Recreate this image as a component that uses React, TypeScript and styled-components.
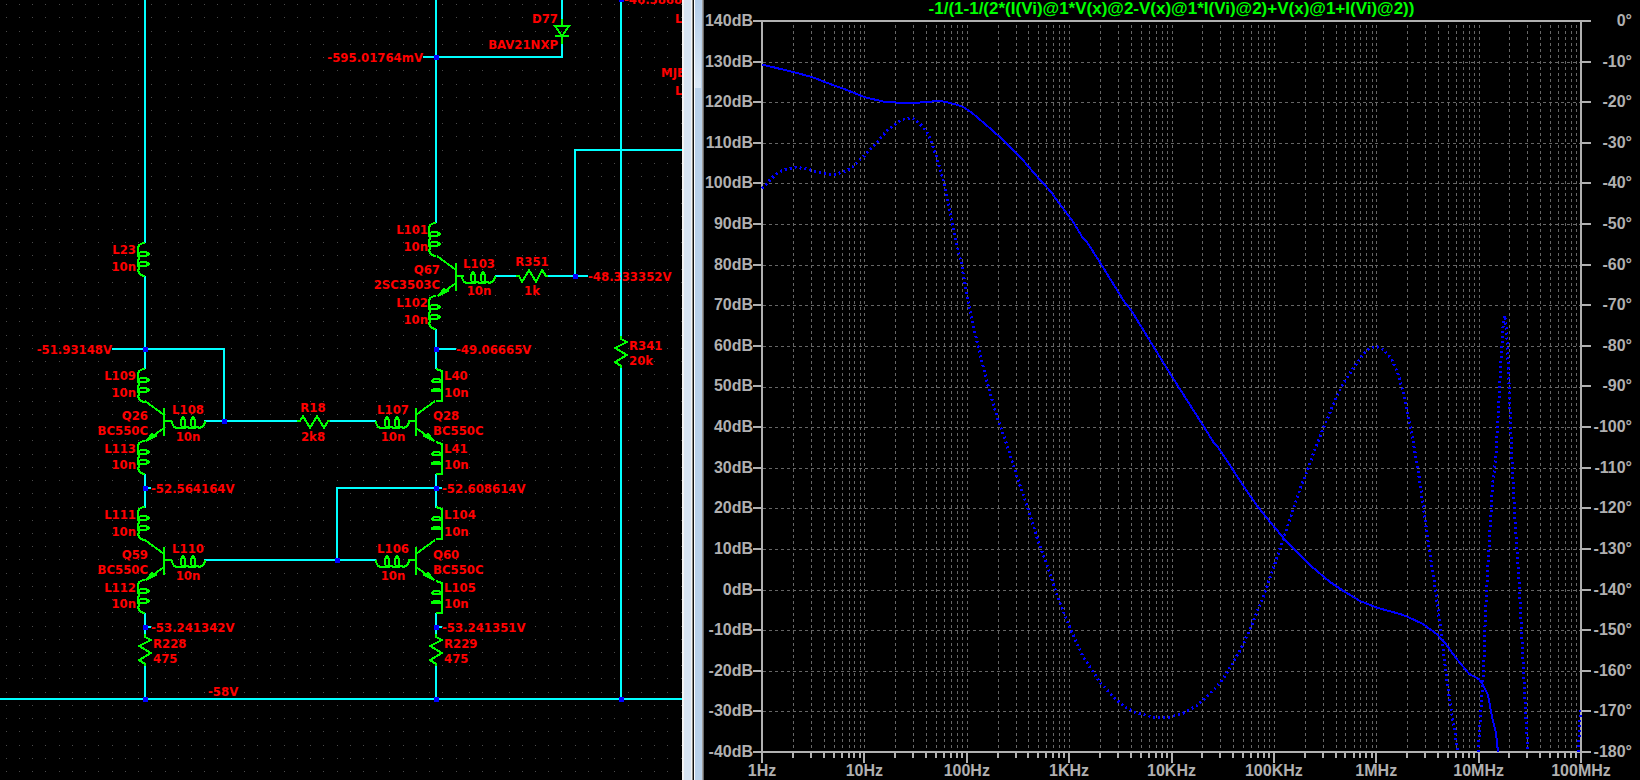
import React from "react";
import styled, { createGlobalStyle } from "styled-components";

const GlobalStyle = createGlobalStyle`
  body {
    margin: 0;
    background: #000;
  }
`;

const Workspace = styled.main`
  display: grid;
  grid-template-columns: minmax(0, 682fr) 22px minmax(0, 936fr);
  height: 100vh;
  min-height: 480px;
  overflow: hidden;
  background: #000;
`;

/* ---------- Schematic ---------- */

const SchematicPane = styled.section`
  min-width: 0;
  overflow: hidden;
`;

const SchematicCanvas = styled.svg`
  display: block;
  width: 100%;
  height: 100%;
  shape-rendering: crispEdges;
`;

const GridDots = styled.path`
  stroke: #4a4a4a;
  stroke-width: 1px;
`;

const Wire = styled.path`
  fill: none;
  stroke: #00ffff;
  stroke-width: 2px;
`;

const SymbolPath = styled.path`
  fill: none;
  stroke: #00ff00;
  stroke-width: 2px;
`;

const Junction = styled.rect`
  fill: #0000ff;
`;

type Anchor = "start" | "middle" | "end";

const Label = styled.text<{ $anchor: Anchor }>`
  fill: #ff0000;
  font: bold 13px "DejaVu Sans Condensed", "DejaVu Sans", sans-serif;
  text-anchor: ${(p) => p.$anchor};
`;

const dotPath = (() => {
  const parts: string[] = [];
  for (let r = 0; r < 90; r++) {
    for (let c = 0; c < 120; c++) {
      parts.push(`M${Math.floor(6.3 + c * 13.23)} ${Math.floor(4.7 + r * 13.22)}.5h1`);
    }
  }
  return parts.join("");
})();

const wires = [
  "M145 0V243M145 276V369M112 349H225M224 349V421M204 421H298M329 421H376",
  "M145 474V508M145 488H151M145 613V634M145 627H151M145 666V699",
  "M0 699H3000",
  "M436 0V223M423 57H563M562 57V44M562 0V19M436 329V369M436 349H456",
  "M495 276H517M547 276H588M575 276V149M574 150H3000M621 0V336M621 367V699",
  "M436 474V508M337 560V487M336 488H442M204 560H376M436 613V634M436 627H442M436 666V699",
];

const junctions: [number, number][] = [
  [145, 349], [224, 421], [145, 488], [145, 627], [145, 699],
  [436, 57], [436, 349], [436, 488], [436, 627], [436, 699],
  [575, 276], [621, -1], [621, 699], [337, 560],
];

const COIL =
  "M0 0V2L2 6L5 7H12L15 6L18 7H22L25 6L28 7L31 5L33 2V0M10 7L9 3V-1L11-4L13-1V3L12 7M20 7L19 3V-1L21-4L23-1V3L22 7";
const FLAT_COIL = "M0 0L6 2V32H0M6 13H-3L-4 12L-2 10H3L5 12M6 22H-4V21L-2 20H3L6 22";
const RESISTOR = "M0 0V3L6 6L-6 12L6 19L-6 26L0 30V32";
const TRANSISTOR = "M0-13V15M0 0H8M-19-20L0-6M0 7L-18 20M-18 20L-12 13L-8 15Z";

const horizontalCoils: [number, number][] = [[172, 421], [172, 560], [376, 421], [376, 560], [462, 276]];
const leftCoils: [number, number][] = [
  [145, 243], [145, 369], [145, 441], [145, 507], [145, 580], [436, 223], [436, 296],
];
const rightCoils: [number, number][] = [[436, 369], [436, 442], [436, 507], [436, 581]];
const resistors: [number, number][] = [[145, 634], [436, 634], [621, 336]];
const transistors: [number, number, number][] = [
  [164, 421, 1], [164, 560, 1], [456, 276, 1], [416, 421, -1], [416, 560, -1],
];

const labels: [string, number, number, Anchor][] = [
  ["L23", 136, 254, "end"],
  ["10n", 136, 271, "end"],
  ["-51.93148V", 112, 354, "end"],
  ["L109", 136, 380, "end"],
  ["10n", 136, 397, "end"],
  ["Q26", 148, 420, "end"],
  ["BC550C", 148, 435, "end"],
  ["L113", 136, 453, "end"],
  ["10n", 136, 469, "end"],
  ["L108", 188, 414, "middle"],
  ["10n", 188, 441, "middle"],
  ["R18", 313, 412, "middle"],
  ["2k8", 313, 441, "middle"],
  ["-52.564164V", 151, 493, "start"],
  ["L111", 136, 519, "end"],
  ["10n", 136, 536, "end"],
  ["Q59", 148, 559, "end"],
  ["BC550C", 148, 574, "end"],
  ["L112", 136, 592, "end"],
  ["10n", 136, 608, "end"],
  ["L110", 188, 553, "middle"],
  ["10n", 188, 580, "middle"],
  ["-53.241342V", 151, 632, "start"],
  ["R228", 153, 648, "start"],
  ["475", 153, 663, "start"],
  ["-58V", 208, 696, "start"],
  ["-595.01764mV", 423, 62, "end"],
  ["D77", 558, 23, "end"],
  ["BAV21NXP", 558, 49, "end"],
  ["-46.5868", 624, 4, "start"],
  ["L", 675, 23, "start"],
  ["MJE", 661, 77, "start"],
  ["L", 675, 95, "start"],
  ["L101", 428, 234, "end"],
  ["10n", 428, 251, "end"],
  ["Q67", 440, 274, "end"],
  ["2SC3503C", 440, 289, "end"],
  ["L102", 428, 307, "end"],
  ["10n", 428, 324, "end"],
  ["L103", 479, 268, "middle"],
  ["10n", 479, 295, "middle"],
  ["R351", 532, 266, "middle"],
  ["1k", 532, 295, "middle"],
  ["-48.333352V", 588, 281, "start"],
  ["-49.06665V", 456, 354, "start"],
  ["R341", 629, 350, "start"],
  ["20k", 629, 365, "start"],
  ["L40", 444, 380, "start"],
  ["10n", 444, 397, "start"],
  ["Q28", 433, 420, "start"],
  ["BC550C", 433, 435, "start"],
  ["L41", 444, 453, "start"],
  ["10n", 444, 469, "start"],
  ["L107", 393, 414, "middle"],
  ["10n", 393, 441, "middle"],
  ["-52.608614V", 442, 493, "start"],
  ["L104", 444, 519, "start"],
  ["10n", 444, 536, "start"],
  ["Q60", 433, 559, "start"],
  ["BC550C", 433, 574, "start"],
  ["L105", 444, 592, "start"],
  ["10n", 444, 608, "start"],
  ["L106", 393, 553, "middle"],
  ["10n", 393, 580, "middle"],
  ["-53.241351V", 442, 632, "start"],
  ["R229", 444, 648, "start"],
  ["475", 444, 663, "start"],
];

function Schematic() {
  return (
    <SchematicPane aria-label="Schematic">
      <SchematicCanvas>
        <GridDots d={dotPath} />
        {wires.map((d) => (
          <Wire key={d} d={d} />
        ))}
        {horizontalCoils.map(([x, y]) => (
          <SymbolPath key={`${x},${y}`} d={COIL} transform={`translate(${x} ${y})`} />
        ))}
        {leftCoils.map(([x, y]) => (
          <SymbolPath key={`${x},${y}`} d={COIL} transform={`translate(${x} ${y}) rotate(90)`} />
        ))}
        {rightCoils.map(([x, y]) => (
          <SymbolPath key={`${x},${y}`} d={FLAT_COIL} transform={`translate(${x} ${y})`} />
        ))}
        {resistors.map(([x, y]) => (
          <SymbolPath key={`${x},${y}`} d={RESISTOR} transform={`translate(${x} ${y})`} />
        ))}
        {transistors.map(([x, y, side]) => (
          <SymbolPath key={`${x},${y}`} d={TRANSISTOR} transform={`translate(${x} ${y}) scale(${side} 1)`} />
        ))}
        <SymbolPath d="M297 421H300L303 416L310 428L317 416L324 428L328 421H330" />
        <SymbolPath d="M516 276H519L522 282L529 270L536 282L542 270L546 276H548" />
        <SymbolPath d="M562 19V26M555 26H569L562 36ZM555 36H569M562 36V44" />
        {junctions.map(([x, y]) => (
          <Junction key={`${x},${y}`} x={x - 2} y={y - 2} width={5} height={5} />
        ))}
        {labels.map(([text, x, y, anchor]) => (
          <Label key={`${text}${x},${y}`} x={x} y={y} $anchor={anchor}>
            {text}
          </Label>
        ))}
      </SchematicCanvas>
    </SchematicPane>
  );
}

/* ---------- Window borders between the two panes ---------- */

const Borders = styled.div`
  display: flex;
`;

const BorderStrip = styled.div<{ $width: number; $color: string }>`
  flex: 0 0 ${(p) => p.$width}px;
  background: ${(p) => p.$color};
`;

const GlossStrip = styled(BorderStrip)`
  background: linear-gradient(#b4cde8, #dce9f6) top / 100% 88px no-repeat ${(p) => p.$color};
`;

/* ---------- Plot ---------- */

const AXIS = "#b0b0b0";

const PlotPane = styled.section`
  display: grid;
  grid-template-columns: 58px minmax(0, 1fr) 59px;
  grid-template-rows: 21px minmax(0, 1fr) 28px;
  color: ${AXIS};
  font: bold 16px/18px "Liberation Sans", Arial, sans-serif;
  white-space: nowrap;
`;

const TraceTitle = styled.h1`
  grid-column: 2;
  margin: 0;
  color: #00ff00;
  font-size: 17px;
  line-height: 18px;
  text-align: center;
`;

const ValueAxis = styled.ol<{ $side: "left" | "right" }>`
  grid-row: 2;
  grid-column: ${(p) => (p.$side === "left" ? 1 : 3)};
  display: flex;
  flex-direction: column;
  justify-content: space-between;
  margin: -9px 0;
  padding: 0 ${(p) => (p.$side === "left" ? 0 : 8)}px 0 0;
  list-style: none;
`;

const ValueTick = styled.li<{ $side: "left" | "right" }>`
  display: flex;
  flex-direction: ${(p) => (p.$side === "left" ? "row-reverse" : "row")};
  align-items: center;
  justify-content: ${(p) => (p.$side === "left" ? "flex-start" : "space-between")};
  height: 18px;

  &::before {
    content: "";
    width: ${(p) => (p.$side === "left" ? 9 : 10)}px;
    height: 2px;
    background: ${AXIS};
  }
`;

const PlotArea = styled.svg`
  grid-row: 2;
  grid-column: 2;
  display: block;
  width: 100%;
  height: 100%;
  overflow: visible;
  shape-rendering: crispEdges;

  path,
  polyline {
    fill: none;
    vector-effect: non-scaling-stroke;
  }
`;

const GridLines = styled.path`
  stroke: #666;
  stroke-width: 1px;
  stroke-dasharray: 3 3;
`;

const AxisLine = styled.path`
  stroke: ${AXIS};
  stroke-width: 2px;
`;

const Trace = styled.polyline<{ $dotted?: boolean }>`
  stroke: #0000ff;
  stroke-width: ${(p) => (p.$dotted ? 3 : 2)}px;
  stroke-dasharray: ${(p) => (p.$dotted ? "2 3" : "none")};
`;

const FrequencyAxis = styled.ol`
  grid-row: 3;
  grid-column: 2;
  display: flex;
  justify-content: space-between;
  margin: 0 -40px;
  padding: 10px 0 0;
  list-style: none;
`;

const FrequencyTick = styled.li`
  width: 80px;
  text-align: center;
`;

const WIDTH = 819;
const HEIGHT = 731;
const decade = WIDTH / 8;
const step = HEIGHT / 18;

const verticals: number[] = [];
const minorTicks: number[] = [];
for (let d = 0; d < 8; d++) {
  for (let n = 1; n < 10; n++) {
    const x = Math.round((d + Math.log10(n)) * decade);
    if (x > 0) verticals.push(x);
    if (n > 1) minorTicks.push(x);
  }
}
const decades = Array.from({ length: 9 }, (_, i) => Math.round(i * decade));
const verticalGrid = verticals.map((x) => `M${x}.5 4V${HEIGHT}`).join("");
const horizontalGrid = Array.from({ length: 17 }, (_, i) => `M1 ${Math.round((i + 1) * step)}.5H${WIDTH}`).join("");
const tickPath =
  minorTicks.map((x) => `M${x} ${HEIGHT}v6`).join("") + decades.map((x) => `M${x} ${HEIGHT}v11`).join("");

const magnitude =
  "762,64.5 793,72 812,77 824,81.7 834,85.5 847,90 864,97 883,101.5 898,102.7 918,102.7 940,100.8 953,103.7 963,106.7 973,113.7 987,125.7 1005,141.7 1020,156.7 1038,177.7 1050,190.7 1060,204.3 1073,221.7 1082,236.7 1087,242 1102,265.7 1124,301.3 1131,310 1150,341 1172,376.7 1203,425.3 1214,443 1218,447 1233,470 1247,491.3 1257,505.7 1274,526.7 1287,542 1300,555.3 1313,567.7 1330,582 1343,590.7 1360,601 1377,607.7 1400,614 1408,617 1423,624 1437,634.3 1445,643 1457,659.3 1469,673.7 1479,679.3 1483,684.7 1488,695 1492,716.7 1496,733.3 1498,752";

const phase = [
  "762,188.5 768.3,181.7 774.3,175.7 779,172 786,169.3 796,167.3 806.7,169 815,171.3 826.7,174.3 834.3,174.3 843.3,172 850,169 856.7,163 864.3,155.7 876.7,142.7 887.3,130.3 895,124.3 902.3,119.3 910,118 915,119.3 922.7,126.7 928.3,134.7 934.3,150 941,172.3 945.7,190.7 951,216.7 959.3,255 961.7,265.7 967.3,296 974.3,330 980,354.3 988.3,386.7 997.3,417.7 1006,442.3 1017.3,477.3 1026.7,505 1038.3,541.7 1046.7,564 1058.3,598.7 1070.7,629.7 1083.3,657.3 1099.3,681.3 1111.7,695.3 1125,707.3 1137.3,713.3 1153.3,717 1170,717 1181.7,714 1196.7,705.7 1210,693.7 1220.7,682.3 1232.3,664.3 1241.7,647.3 1251.7,625.3 1264.3,594.3 1274.3,565.3 1282.7,541 1300.3,488 1307.3,470.7 1315.3,448.3 1323.3,428.3 1336.7,396.7 1343.3,383.3 1354.3,366.7 1362.3,355.3 1368.3,349.3 1376,346.3 1384.3,350 1391.7,359.3 1397.3,371.7 1403.3,392.7 1409.3,421 1417.7,467.3 1423.3,506.7 1428.3,543.3 1435,586.7 1441.7,636.7 1446.7,680 1451.7,713.3 1457.7,750",
  "1478,752 1481.7,700 1483.7,666.7 1485.3,616.7 1487.3,576.7 1490,530 1492.7,483.3 1495.7,460 1497.7,423.3 1500.7,366.7 1503.3,321.7 1504.7,315.3 1506.7,331.7 1509.3,390 1511.7,453.3 1515.3,525 1519,580 1521.7,633.3 1524.3,686.7 1527.7,750",
  "1578.3,752 1580,720 1580.7,708",
];

const gains = Array.from({ length: 19 }, (_, i) => `${140 - i * 10}dB`);
const angles = Array.from({ length: 19 }, (_, i) => (i === 0 ? "0°" : `-${i * 10}°`));
const frequencies = ["1Hz", "10Hz", "100Hz", "1KHz", "10KHz", "100KHz", "1MHz", "10MHz", "100MHz"];

function Plot() {
  return (
    <PlotPane aria-label="Bode plot">
      <TraceTitle>-1/(1-1/(2*(I(Vi)@1*V(x)@2-V(x)@1*I(Vi)@2)+V(x)@1+I(Vi)@2))</TraceTitle>
      <ValueAxis $side="left">
        {gains.map((g) => (
          <ValueTick key={g} $side="left">
            <span>{g}</span>
          </ValueTick>
        ))}
      </ValueAxis>
      <PlotArea viewBox={`0 0 ${WIDTH} ${HEIGHT}`} preserveAspectRatio="none">
        <GridLines d={verticalGrid} />
        <GridLines d={horizontalGrid} />
        <AxisLine d={`M-1 0H${WIDTH + 1}M0 0V${HEIGHT}M${WIDTH} 0V${HEIGHT}M-1 ${HEIGHT}H${WIDTH + 1}`} />
        <AxisLine d={tickPath} />
        <g transform="translate(-762 -21)">
          <Trace points={magnitude} />
          {phase.map((points) => (
            <Trace key={points} points={points} $dotted />
          ))}
        </g>
      </PlotArea>
      <ValueAxis $side="right">
        {angles.map((a) => (
          <ValueTick key={a} $side="right">
            <span>{a}</span>
          </ValueTick>
        ))}
      </ValueAxis>
      <FrequencyAxis>
        {frequencies.map((f) => (
          <FrequencyTick key={f}>{f}</FrequencyTick>
        ))}
      </FrequencyAxis>
    </PlotPane>
  );
}

export default function App() {
  return (
    <>
      <GlobalStyle />
      <Workspace>
        <Schematic />
        <Borders>
          <BorderStrip $width={2} $color="#f4f4f4" />
          <BorderStrip $width={7} $color="#d7e4f2" />
          <BorderStrip $width={1} $color="#f4f4f4" />
          <BorderStrip $width={1} $color="#8a8a84" />
          <BorderStrip $width={1} $color="#101010" />
          <BorderStrip $width={1} $color="#ffffff" />
          <GlossStrip $width={6} $color="#b9d1ea" />
          <BorderStrip $width={1} $color="#b9d1ea" />
          <BorderStrip $width={1} $color="#a0a0a0" />
          <BorderStrip $width={1} $color="#696969" />
        </Borders>
        <Plot />
      </Workspace>
    </>
  );
}
